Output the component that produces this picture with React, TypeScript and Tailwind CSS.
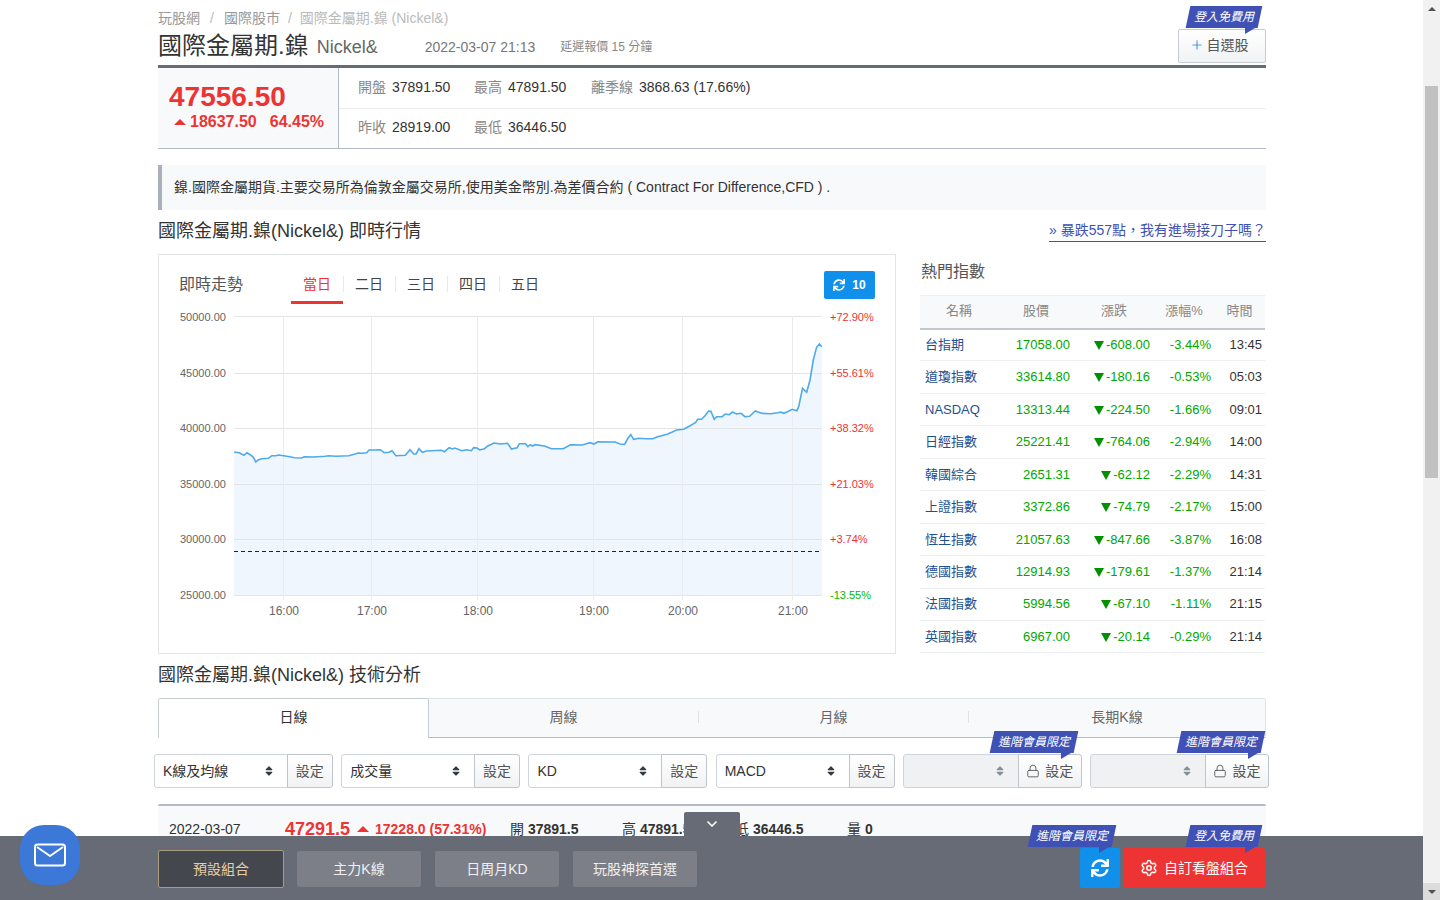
import { FaSort, FaSync } from "react-icons/fa";
import { ChevronDown, Lock, Plus, Settings } from "lucide-react";

const FONT = "font-['Liberation_Sans','Noto_Sans_CJK_TC',sans-serif]";

// traced from the chart, x/y in a stretched space (see toPoint)
const TRACE: [number, number][] = [
  [157, 576], [168, 578], [178, 586], [184, 578], [192, 585], [198, 592], [203, 606], [208, 600], [215, 596], [230, 595],
  [237, 587], [245, 587], [252, 585], [262, 587], [275, 590], [285, 593], [300, 594], [306, 590], [325, 591], [350, 589],
  [358, 587], [372, 589], [400, 587], [412, 583], [420, 579], [428, 580], [438, 578], [443, 570], [455, 570], [467, 569],
  [475, 578], [485, 577], [492, 572], [500, 587], [520, 586], [530, 569], [538, 582], [543, 582], [549, 566], [556, 577],
  [565, 573], [597, 571], [603, 575], [613, 563], [620, 567], [625, 564], [640, 572], [650, 569], [660, 572], [665, 563],
  [672, 564], [678, 570], [688, 566], [695, 558], [708, 549], [722, 552], [737, 550], [745, 567], [757, 563], [762, 551],
  [775, 551], [780, 560], [785, 554], [790, 558], [795, 554], [815, 558], [830, 566], [855, 566], [870, 554], [895, 555],
  [912, 548], [920, 552], [928, 545], [965, 546], [975, 552], [985, 553], [992, 535], [998, 524], [1004, 538], [1015, 535],
  [1030, 536], [1045, 536], [1055, 530], [1075, 523], [1085, 517], [1095, 510], [1110, 508], [1120, 500], [1135, 488],
  [1140, 478], [1148, 478], [1155, 468], [1163, 453], [1168, 454], [1175, 478], [1180, 470], [1192, 470], [1198, 462],
  [1207, 464], [1214, 456], [1222, 462], [1232, 460], [1240, 470], [1250, 469], [1262, 453], [1275, 460], [1295, 461],
  [1310, 458], [1316, 456], [1322, 460], [1330, 455], [1340, 448], [1350, 452], [1354, 440], [1362, 385], [1371, 397],
  [1378, 360], [1385, 300], [1392, 262], [1398, 252], [1403, 260],
];

const toPoint = ([x, y]: [number, number]) => `${(160 + x / 2.12).toFixed(1)},${(260 + y / 3).toFixed(1)}`;
const LINE = TRACE.map(toPoint).join(" ");

const Y_TICKS = [
  { y: 316.5, text: 320.5, left: "50000.00", right: "+72.90%" },
  { y: 373.5, text: 377, left: "45000.00", right: "+55.61%" },
  { y: 428.5, text: 432, left: "40000.00", right: "+38.32%" },
  { y: 484.5, text: 488, left: "35000.00", right: "+21.03%" },
  { y: 539.5, text: 543, left: "30000.00", right: "+3.74%" },
  { y: 595.5, text: 599, left: "25000.00", right: "-13.55%" },
];

const X_TICKS = [
  { x: 283.5, label: "16:00" },
  { x: 371.5, label: "17:00" },
  { x: 477.5, label: "18:00" },
  { x: 593.5, label: "19:00" },
  { x: 682.5, label: "20:00" },
  { x: 792.5, label: "21:00" },
];

const INDEXES = [
  ["台指期", "17058.00", "-608.00", "-3.44%", "13:45"],
  ["道瓊指數", "33614.80", "-180.16", "-0.53%", "05:03"],
  ["NASDAQ", "13313.44", "-224.50", "-1.66%", "09:01"],
  ["日經指數", "25221.41", "-764.06", "-2.94%", "14:00"],
  ["韓國綜合", "2651.31", "-62.12", "-2.29%", "14:31"],
  ["上證指數", "3372.86", "-74.79", "-2.17%", "15:00"],
  ["恆生指數", "21057.63", "-847.66", "-3.87%", "16:08"],
  ["德國指數", "12914.93", "-179.61", "-1.37%", "21:14"],
  ["法國指數", "5994.56", "-67.10", "-1.11%", "21:15"],
  ["英國指數", "6967.00", "-20.14", "-0.29%", "21:14"],
];

function Tag({ text, className }: { text: string; className: string }) {
  return (
    <span className={`absolute z-10 ${className}`}>
      <span className="block h-[22px] -skew-x-12 bg-[#3f51b5] text-center text-[12px] leading-[22px] text-white">
        <span className="inline-block skew-x-12 italic">{text}</span>
      </span>
      <span className="absolute right-[5px] top-[22px] h-0 w-0 border-r-[10px] border-t-[6px] border-r-transparent border-t-[#3f51b5]" />
    </span>
  );
}

function Up({ className }: { className: string }) {
  return (
    <svg className={className} width="12" height="6" viewBox="0 0 12 6">
      <polygon points="6,0 12,6 0,6" fill="#ee3333" />
    </svg>
  );
}

function Control({ label, locked }: { label?: string; locked?: boolean }) {
  return (
    <div className="relative flex h-[34px]">
      {locked && <Tag text="進階會員限定" className="left-[89px] top-[-23px] w-[84px]" />}
      <div
        className={`flex min-w-0 flex-1 items-center justify-between rounded-l-[3px] border border-[#ced4da] pl-[8px] pr-[12px] text-[14px] ${
          locked ? "bg-[#eff1f3]" : "bg-white"
        }`}
      >
        <span className="text-[#333]">{label}</span>
        <FaSort className={`h-[12px] w-[12px] ${locked ? "text-[#868e96]" : "text-[#343a40]"}`} />
      </div>
      <div
        className={`-ml-px flex items-center gap-[5px] rounded-r-[3px] border border-[#c0c4cc] bg-gradient-to-b from-white to-[#f1f2f4] text-[14px] text-[#555] ${
          locked ? "w-[64px] justify-center" : "w-[46px] justify-center"
        }`}
      >
        {locked && <Lock className="h-[14px] w-[14px]" strokeWidth={1.5} />}
        設定
      </div>
    </div>
  );
}

function Chart() {
  return (
    <svg className="block" width="736" height="349" viewBox="159 304 736 349">
      <polygon points={`${LINE} 822,595 234,595`} fill="#eff6fe" />
      {Y_TICKS.map((t) => (
        <g key={t.y}>
          <line x1="234" x2="822" y1={t.y} y2={t.y} stroke="#e2e4e8" />
          <text x="180" y={t.text} fontSize="11" fill="#666">{t.left}</text>
          <text x="830" y={t.text} fontSize="11" fill={t.right.startsWith("-") ? "#00b800" : "#ee3333"}>{t.right}</text>
        </g>
      ))}
      {X_TICKS.map((t) => (
        <g key={t.x}>
          <line x1={t.x} x2={t.x} y1="316" y2="600" stroke="#e9ebee" />
          <text x={t.x + 0.5} y="615" fontSize="12" fill="#666" textAnchor="middle">{t.label}</text>
        </g>
      ))}
      <line x1="234" x2="820" y1="551.5" y2="551.5" stroke="#222" strokeDasharray="4 3" />
      <polyline points={LINE} fill="none" stroke="#4eaaec" strokeWidth="1.6" />
    </svg>
  );
}

function IndexTable() {
  return (
    <table className="w-[345px] table-fixed border-collapse text-[13px]">
      <colgroup>
        <col className="w-[78px]" />
        <col className="w-[76px]" />
        <col className="w-[80px]" />
        <col className="w-[60px]" />
        <col className="w-[51px]" />
      </colgroup>
      <thead>
        <tr className="h-[33px] border-t border-b-2 border-t-[#eceef1] border-b-[#c3c7ce] bg-[#f8f9fb] text-[#888]">
          {["名稱", "股價", "漲跌", "漲幅%", "時間"].map((h) => (
            <th key={h} className="pb-[2px] text-center font-normal">{h}</th>
          ))}
        </tr>
      </thead>
      <tbody>
        {INDEXES.map((r) => (
          <tr key={r[0]} className="h-[32.45px] border-b border-[#eceef1]">
            <td className="pl-[5px] text-[#1d4f91]">{r[0]}</td>
            <td className="pr-[4px] text-right text-[#00a800]">{r[1]}</td>
            <td className="pr-[4px] text-right text-[#00a800]">
              <svg className="mr-[2px] inline-block align-[-1px]" width="10" height="9" viewBox="0 0 10 9">
                <polygon points="0,0 10,0 5,9" fill="#009000" />
              </svg>
              {r[2]}
            </td>
            <td className="pr-[3px] text-right text-[#00a800]">{r[3]}</td>
            <td className="pr-[3px] text-right text-[#333]">{r[4]}</td>
          </tr>
        ))}
      </tbody>
    </table>
  );
}

function BottomBar() {
  return (
    <div className="absolute bottom-0 left-0 h-[64px] w-[1423px] bg-[#666b75]">
      <div className="absolute left-[684px] top-[-24px] flex h-[24px] w-[56px] items-start justify-center rounded-t-[2px] bg-[#666b75] pt-[4px] text-white">
        <ChevronDown className="h-[16px] w-[16px]" strokeWidth={2.5} />
      </div>
      <div className="absolute left-[20px] top-[-11px] flex h-[60px] w-[60px] items-center justify-center rounded-[24px] bg-[#3b78d8]">
        <svg width="32" height="24" viewBox="0 0 32 24" fill="none" stroke="white" strokeWidth="2" strokeLinejoin="round">
          <rect x="1" y="1.5" width="30" height="21" rx="2.5" />
          <path d="M3 4l13 9 13-9" />
        </svg>
      </div>
      <div className="ml-[158px] flex h-full w-[1108px] items-center pt-[2px]">
        <div className="flex h-[38px] w-[126px] items-center justify-center rounded-[2px] border border-[#a89c80] bg-[#45474f] text-[14px] text-[#e6cfa6]">
          預設組合
        </div>
        {["主力K線", "日周月KD", "玩股神探首選"].map((b, i) => (
          <div
            key={b}
            className={`flex h-[36px] w-[124px] items-center justify-center rounded-[2px] bg-[#7c7f88] text-[14px] text-[#f0f0f0] ${
              i === 0 ? "ml-[13px]" : "ml-[14px]"
            }`}
          >
            {b}
          </div>
        ))}
        <div className="relative mb-[2px] ml-auto flex h-[40px] w-[40px] items-center justify-center rounded-[2px] bg-[#1090ea] text-white">
          <Tag text="進階會員限定" className="left-[-50px] top-[-23px] w-[84px]" />
          <FaSync className="h-[18px] w-[18px]" />
        </div>
        <div className="relative mb-[2px] ml-[3px] mr-[1px] flex h-[40px] w-[142px] items-center justify-center gap-[6px] rounded-[2px] bg-[#ee3333] text-[14px] text-white">
          <Tag text="登入免費用" className="left-[65px] top-[-23px] w-[72px]" />
          <Settings className="h-[18px] w-[18px]" strokeWidth={2} />
          自訂看盤組合
        </div>
      </div>
    </div>
  );
}

function Scrollbar() {
  return (
    <div className="relative h-full w-[17px] shrink-0 bg-[#f1f1f1]">
      <div className="flex h-[17px] items-center justify-center">
        <span className="h-0 w-0 border-x-[4px] border-b-[4px] border-x-transparent border-b-[#505050]" />
      </div>
      <div className="absolute left-[2px] top-[86px] h-[392px] w-[13px] bg-[#c1c1c1]" />
      <div className="absolute bottom-0 flex h-[17px] w-[17px] items-center justify-center bg-[#dcdcdc]">
        <span className="h-0 w-0 border-x-[4px] border-t-[4px] border-x-transparent border-t-[#505050]" />
      </div>
    </div>
  );
}

export default function App() {
  return (
    <div className={`relative flex h-[900px] w-full overflow-hidden bg-white text-[#333] ${FONT}`}>
      <div className="h-full w-[1423px] shrink-0 overflow-hidden">
        <div className="ml-[158px] w-[1108px]">
          {/* breadcrumb and title */}
          <div className="flex h-[18px] items-center pt-[18px] text-[14px] text-[#999]">
            <span>玩股網</span>
            <span className="mx-[10px] text-[#bbb]">/</span>
            <span>國際股市</span>
            <span className="mx-[8px] text-[#bbb]">/</span>
            <span className="text-[#bbb]">國際金屬期.鎳 (Nickel&amp;)</span>
          </div>
          <div className="relative mt-[11px] flex h-[36px] items-center">
            <h1 className="pb-[2px] text-[24px] font-normal leading-none text-[#333]">國際金屬期.鎳</h1>
            <span className="ml-[8px] text-[18px] text-[#666]">Nickel&amp;</span>
            <span className="ml-[47px] text-[14px] text-[#777]">2022-03-07 21:13</span>
            <span className="ml-[25px] text-[12px] text-[#888]">延遲報價 15 分鐘</span>
            <Tag text="登入免費用" className="right-[6px] top-[-23px] w-[72px]" />
            <div className="absolute right-0 top-0 flex h-[34px] w-[88px] items-center justify-center gap-[3px] rounded-[2px] border border-[#c8ccd2] bg-gradient-to-b from-white to-[#f1f2f4] pb-[2px] pr-[6px] text-[14px] text-[#555]">
              <Plus className="h-[14px] w-[14px] text-[#5a95ee]" strokeWidth={2} />
              自選股
            </div>
          </div>

          {/* quote */}
          <div className="flex h-[84px] border-t-[3px] border-b border-t-[#666b75] border-b-[#b5bac4]">
            <div className="w-[181px] border-r border-[#b5bac4] bg-[#f8f9fb] pl-[11px] pt-[13px]">
              <div className="text-[28px] font-bold leading-[32px] text-[#ee3333]">47556.50</div>
              <div className="flex items-center text-[16px] font-bold leading-[18px] text-[#ee3333]">
                <Up className="ml-[5px] mr-[4px]" />
                <span>18637.50</span>
                <span className="ml-[13px]">64.45%</span>
              </div>
            </div>
            <div className="flex-1 text-[14px]">
              <div className="flex h-[41px] items-center border-b border-[#eceef1] pb-[2px] pl-[19px]">
                <span className="text-[#888]">開盤</span><span className="ml-[6px] w-[82px]">37891.50</span>
                <span className="text-[#888]">最高</span><span className="ml-[6px] w-[83px]">47891.50</span>
                <span className="text-[#888]">離季線</span><span className="ml-[6px]">3868.63 (17.66%)</span>
              </div>
              <div className="flex h-[39px] items-center pb-[2px] pl-[19px]">
                <span className="text-[#888]">昨收</span><span className="ml-[6px] w-[82px]">28919.00</span>
                <span className="text-[#888]">最低</span><span className="ml-[6px]">36446.50</span>
              </div>
            </div>
          </div>

          {/* note */}
          <div className="mt-[16px] flex h-[45px] items-center border-l-4 border-[#aab0ba] bg-[#f8f9fb] pl-[12px] text-[14px] text-[#333]">
            鎳.國際金屬期貨.主要交易所為倫敦金屬交易所,使用美金幣別.為差價合約 ( Contract For Difference,CFD ) .
          </div>

          <div className="mb-[12px] mt-[8px] flex h-[24px] items-center justify-between">
            <h2 className="pt-[2px] text-[18px] font-normal text-[#333]">國際金屬期.鎳(Nickel&amp;) 即時行情</h2>
            <a className="self-end border-b border-[#3f51b5] pb-px text-[14px] leading-[20px] text-[#3f51b5]">» 暴跌557點，我有進場接刀子嗎？</a>
          </div>

          {/* chart and indexes */}
          <div className="flex h-[400px]">
            <div className="w-[738px] border border-[#e2e4e8]">
              <div className="relative flex h-[49px] items-center">
                <span className="ml-[20px] mt-[10px] w-[112px] text-[16px] text-[#555]">即時走勢</span>
                <div className="flex h-full items-end text-[14px] text-[#444]">
                  {["當日", "二日", "三日", "四日", "五日"].map((d, i) => (
                    <div
                      key={d}
                      className={`flex h-[33px] w-[52px] justify-center pt-[3px] ${
                        i === 0 ? "border-b-[3px] border-[#ee3333] text-[#ee3333]" : ""
                      }`}
                    >
                      {d}
                    </div>
                  ))}
                </div>
                <div className="absolute left-[665px] top-[16px] flex h-[28px] w-[51px] items-center justify-center gap-[7px] rounded-[2px] bg-[#1090ea] text-[12px] font-bold text-white">
                  <FaSync className="h-[12px] w-[12px]" />
                  10
                </div>
                {[1, 2, 3, 4].map((n) => (
                  <span key={n} className={`absolute top-[21px] h-[16px] w-px bg-[#e8e9ec] ${["left-[184px]", "left-[236px]", "left-[288px]", "left-[340px]"][n - 1]}`} />
                ))}
              </div>
              <Chart />
            </div>
            <div className="ml-[24px] w-[346px]">
              <h3 className="mb-[8px] flex h-[33px] items-center pl-px pt-[2px] text-[16px] font-normal text-[#555]">熱門指數</h3>
              <IndexTable />
            </div>
          </div>

          <h2 className="mt-[7px] flex h-[28px] items-center text-[18px] font-normal text-[#333]">國際金屬期.鎳(Nickel&amp;) 技術分析</h2>

          {/* technical tabs */}
          <div className="mt-[9px] flex h-[40px] text-[14px]">
            <div className="flex w-[271px] items-center justify-center rounded-t-[2px] border border-b-0 border-[#c8ccd4] bg-white pb-[2px] text-[#333]">日線</div>
            <div className="flex flex-1 items-center rounded-tr-[2px] border-t border-r border-b border-t-[#e2e4e8] border-r-[#e2e4e8] border-b-[#b5bac4] bg-[#f8f9fb] pb-[2px] text-[#666]">
              <span className="flex h-[12px] w-[270px] items-center justify-center border-r border-[#dfe1e5]">周線</span>
              <span className="flex h-[12px] w-[270px] items-center justify-center border-r border-[#dfe1e5]">月線</span>
              <span className="flex flex-1 items-center justify-center">長期K線</span>
            </div>
          </div>

          <div className="ml-[-4px] mr-[-3px] mt-[16px] grid grid-cols-6 gap-x-[8.4px]">
            <Control label="K線及均線" />
            <Control label="成交量" />
            <Control label="KD" />
            <Control label="MACD" />
            <Control locked />
            <Control locked />
          </div>

          {/* day summary, mostly under the bottom bar */}
          <div className="relative mt-[16px] h-[96px] rounded-t-[2px] border-t-2 border-[#b5bac4] bg-[#f8f9fb] text-[14px]">
            <div className="flex h-[46px] items-center pl-[11px]">
              <span className="w-[116px]">2022-03-07</span>
              <span className="w-[72px] text-[18px] font-bold text-[#ee3333]">47291.5</span>
              <Up className="mr-[6px]" />
              <span className="w-[135px] font-bold text-[#ee3333]">17228.0 (57.31%)</span>
              <span className="w-[112px]">開 <b>37891.5</b></span>
              <span className="w-[113px]">高 <b>47891.5</b></span>
              <span className="w-[112px]">低 <b>36446.5</b></span>
              <span>量 <b>0</b></span>
            </div>
          </div>
        </div>
      </div>
      <Scrollbar />
      <BottomBar />
    </div>
  );
}
